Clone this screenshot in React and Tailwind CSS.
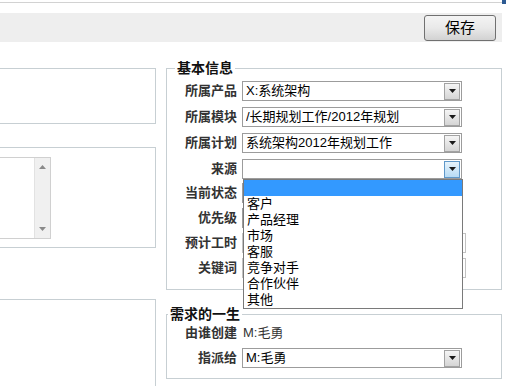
import React from 'react';

const font = "font-['Liberation_Sans','Noto_Sans_CJK_SC',sans-serif]";

const Arrow = ({ active }) => (
  <div
    className={`w-[16px] h-[17px] border flex items-center justify-center ${
      active
        ? 'border-[#5f98c9] bg-linear-to-b from-[#e6f3fc] to-[#b7dbf4]'
        : 'border-[#a3a3a3] bg-linear-to-b from-[#f5f5f5] to-[#d5d5d5]'
    }`}
  >
    <svg width="7" height="4" viewBox="0 0 7 4">
      <path d="M0 0h7L3.5 4z" fill="#1a1a1a" />
    </svg>
  </div>
);

const Select = ({ value, active }) => (
  <div className="h-[20px] w-[220px] border border-[#9c9c9c] bg-white flex items-center justify-between pl-[3px] pr-px text-[13px] text-black">
    <span className="truncate leading-[18px]">{value}</span>
    <Arrow active={active} />
  </div>
);

const Input = () => <div className="h-[20px] w-[224px] border border-[#c2c2c2] bg-white" />;

const Row = ({ label, children }) => (
  <div className="flex items-center h-[20px] gap-[5px]">
    <div className="w-[70px] text-right font-bold text-[13px] leading-[18px] text-[#333]">{label}</div>
    {children}
  </div>
);

const sources = ['客户', '产品经理', '市场', '客服', '竞争对手', '合作伙伴', '其他'];

const Dropdown = () => (
  <div className="absolute left-px top-full z-10 w-[220px] border border-[#7a7a7a] bg-white text-[13px] text-black">
    <div className="h-[16px] bg-[#3399ff]" />
    {sources.map((s) => (
      <div key={s} className="h-[16px] leading-[16px] pl-[3px]">{s}</div>
    ))}
  </div>
);

const Scrollbar = () => (
  <div className="w-[16px] h-full bg-[#f0f0f0] border-l border-[#e2e2e2] flex flex-col items-center justify-between py-[7px]">
    <svg width="7" height="4" viewBox="0 0 7 4"><path d="M3.5 0L7 4H0z" fill="#8a8a8a" /></svg>
    <svg width="7" height="4" viewBox="0 0 7 4"><path d="M0 0h7L3.5 4z" fill="#8a8a8a" /></svg>
  </div>
);

export default function App() {
  return (
    <div className={`w-[506px] h-[386px] overflow-hidden bg-white ${font}`}>
      {/* top edge */}
      <div className="flex h-[4px]">
        <div className="flex-1 h-[3px] border-b border-[#d2d2d2]" />
        <div className="w-[4px] bg-[#2d5a93]" />
      </div>

      {/* toolbar */}
      <div className="mt-[9px] w-[502px] h-[29px] bg-[#eeeeee] flex items-center justify-end pr-[6px]">
        <button className="w-[72px] h-[26px] rounded-[3px] border border-[#707070] bg-linear-to-b from-[#f4f4f4] via-[#e9e9e9] to-[#d2d2d2] text-[15px] leading-[20px] text-black">
          保存
        </button>
      </div>

      <div className="mt-[18px] flex gap-[10px]">
        {/* left column */}
        <div className="w-[156px] pt-[8px] flex flex-col">
          <div className="h-[56px] border border-l-0 border-[#c7cfd3]" />
          <div className="mt-[23px] h-[101px] border border-l-0 border-[#c7cfd3] pt-[9px]">
            <div className="w-[51px] h-[82px] border border-l-0 border-[#d0d0d0] flex justify-end">
              <Scrollbar />
            </div>
          </div>
          <div className="mt-[51px] h-[120px] border border-l-0 border-[#c7cfd3]" />
        </div>

        {/* right column */}
        <div className="w-[336px] flex flex-col">
          <fieldset className="w-full border border-[#c7cfd3] pt-[5px] pb-[11px]">
            <legend className="ml-[8px] px-[2px] text-[14px] font-bold leading-[16px] text-[#111]">基本信息</legend>
            <div className="flex flex-col gap-[6px]">
              <Row label="所属产品"><Select value="X:系统架构" /></Row>
              <Row label="所属模块"><Select value="/长期规划工作/2012年规划" /></Row>
              <Row label="所属计划"><Select value="系统架构2012年规划工作" /></Row>
              <Row label="来源">
                <div className="relative">
                  <Select value="" active />
                  <Dropdown />
                </div>
              </Row>
            </div>
            <div className="mt-[4px] flex flex-col gap-[5px]">
              <Row label="当前状态"><Select value="" /></Row>
              <Row label="优先级"><Select value="" /></Row>
              <Row label="预计工时"><Input /></Row>
              <Row label="关键词"><Input /></Row>
            </div>
          </fieldset>

          <fieldset className="mt-[16px] w-full border border-[#c7cfd3] pt-px pb-[10px]">
            <legend className="ml-px px-[2px] text-[14px] font-bold leading-[16px] text-[#111]">需求的一生</legend>
            <div className="flex flex-col gap-[5px]">
              <Row label="由谁创建">
                <span className="pl-px text-[13px] leading-[18px] text-[#333]">M:毛勇</span>
              </Row>
              <Row label="指派给"><Select value="M:毛勇" /></Row>
            </div>
          </fieldset>
        </div>
      </div>
    </div>
  );
}
